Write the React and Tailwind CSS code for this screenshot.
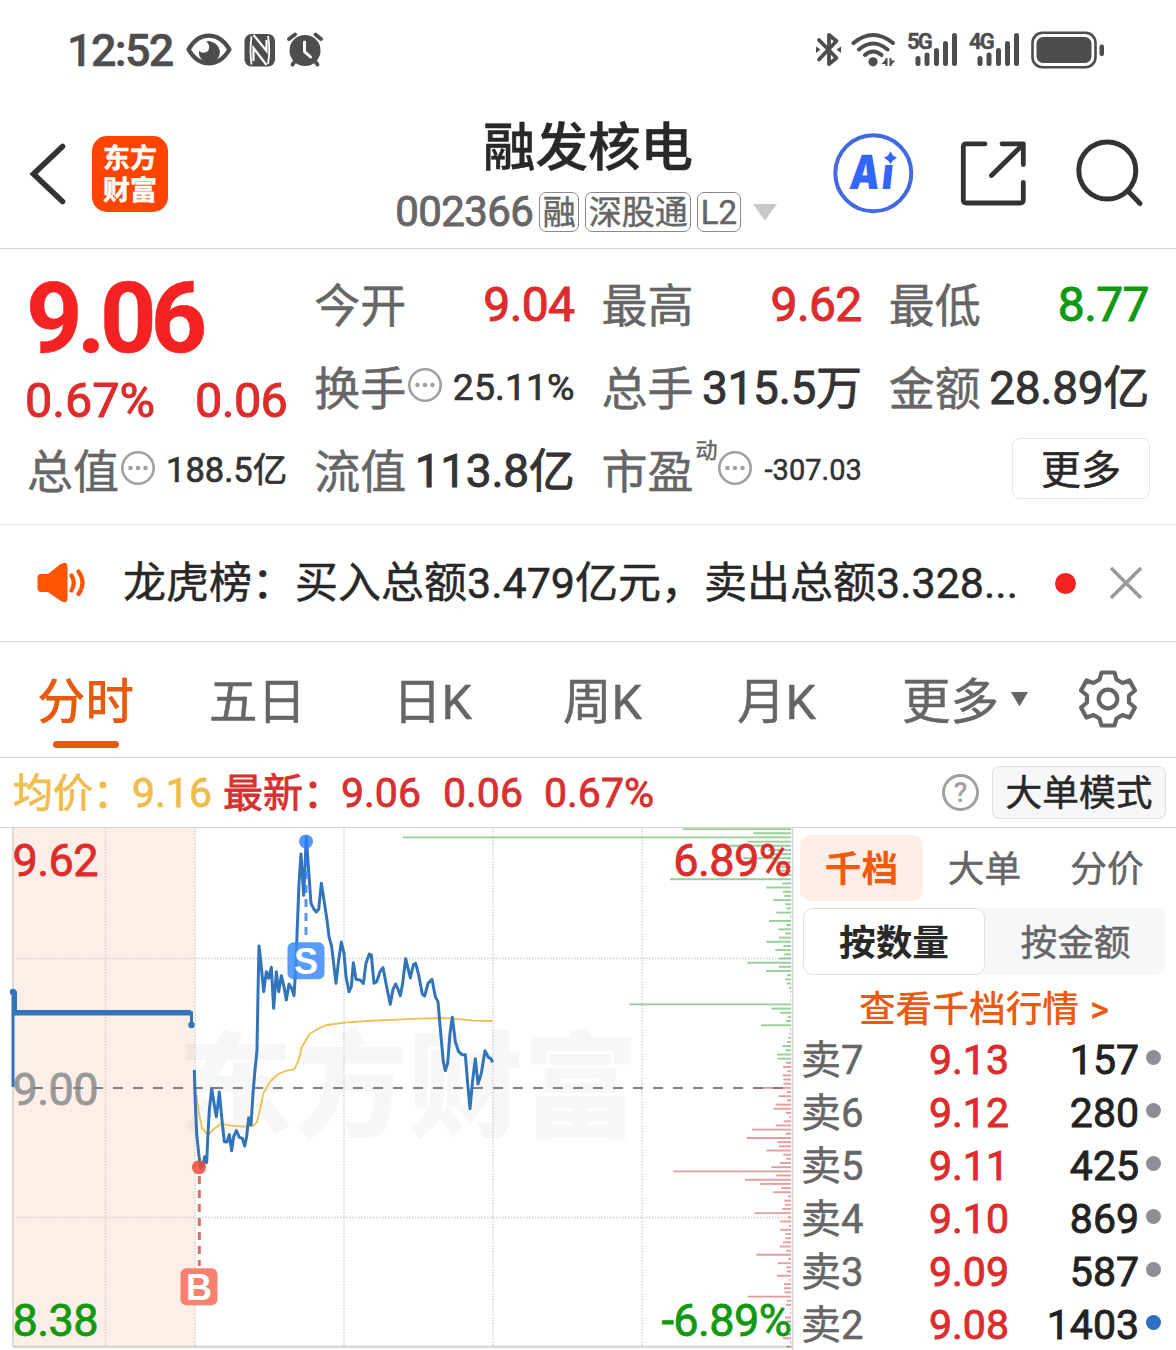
import React from "react";

/* ---------- status bar ---------- */

function SignalBars({ label }) {
  return (
    <div className="flex w-[52px] h-[36px] relative">
      <span className="absolute left-0 top-[-2px] text-[22px] leading-[24px] font-semibold tracking-[-1.8px]">
        {label}
      </span>
      <svg className="w-full h-full" viewBox="0 0 52 36" fill="none" stroke="#4d4d4d" strokeWidth="5" strokeLinecap="round">
        <path d="M11 26.500v5M20 23v8.500M29.500 18.500v13M38.500 11.500v20M47.500 3.500v28" />
      </svg>
    </div>
  );
}

function StatusBar() {
  return (
    <div className="flex h-[100px] items-center pl-[67px] pr-[71px] text-[#4d4d4d]">
      <span className="w-[108px] whitespace-nowrap text-[45px] leading-none font-medium tracking-[-1.7px]">12:52</span>
      <svg className="ml-[11px] w-[46px] h-[34px]" viewBox="186 33 46 34">
        <path d="M188.500 49.500C199 31 218.500 31 229.500 49.500C218.500 68 199 68 188.500 49.500Z" fill="none" stroke="#4d4d4d" strokeWidth="4.200" strokeLinejoin="round" />
        <path d="M206 41.500Q209 40.500 212 42A10.500 10.500 0 1 1 199 50.500C201 53.500 206.500 53.500 208.500 50C210 47 209 43.500 206 41.500Z" fill="#4d4d4d" />
      </svg>
      <svg className="ml-[12px] w-[32px] h-[34px]" viewBox="244 32 32 34">
        <rect x="244.500" y="33" width="30.500" height="32.500" rx="7" fill="#4d4d4d" />
        <path d="M251.500 35.500Q249.500 49 251.500 63.500M268 35Q270.500 49 268 63" fill="none" stroke="#fff" strokeWidth="1.800" />
        <path d="M253.500 34L266.500 50V39M266.500 64L253.500 47V60" fill="none" stroke="#fff" strokeWidth="2.200" />
      </svg>
      <svg className="ml-[10px] w-[38px] h-[36px]" viewBox="286 32 38 36">
        <circle cx="305" cy="50.500" r="15.500" fill="#4d4d4d" />
        <path d="M289 39L295 34.500M315.500 34.500L321 39M292.500 64.500L296 60M317.500 64.500L314 60" stroke="#4d4d4d" strokeWidth="3.800" strokeLinecap="round" />
        <path d="M304.500 42V51.500L310.500 57" fill="none" stroke="#fff" strokeWidth="3" strokeLinecap="round" />
      </svg>

      <div className="ml-auto flex items-center">
        <svg className="w-[28px] h-[36px]" viewBox="815 32 28 36">
          <path d="M820 40L837.500 58L830 64V35L837.500 41L820 59.500" fill="none" stroke="#4d4d4d" strokeWidth="3.800" strokeLinecap="round" strokeLinejoin="round" />
          <path d="M817 46.500L821.500 49.500L817 53ZM842 46.500L837.500 49.500L842 53Z" fill="#4d4d4d" />
        </svg>
        <svg className="ml-[8px] w-[46px] h-[36px]" viewBox="851 32 46 36">
          <path d="M854.500 43Q874 27 894 43M860 49.500Q874 37.500 888.500 49.500M866 55Q874 48 882.500 55" fill="none" stroke="#4d4d4d" strokeWidth="4" strokeLinecap="round" />
          <circle cx="874" cy="61.800" r="4.600" fill="#4d4d4d" />
          <path d="M887.500 58V66M891.500 58V66" stroke="#4d4d4d" strokeWidth="2" />
          <path d="M887.500 58.500L882.500 64H887.500ZM891.500 65.500L896.500 60.500H891.500Z" fill="#4d4d4d" />
        </svg>
        <div className="ml-[11px]"><SignalBars label="5G" /></div>
        <div className="ml-[10px]"><SignalBars label="4G" /></div>
        <svg className="ml-[10px] w-[74px] h-[38px]" viewBox="1032 30.500 74 38">
          <rect x="1033.500" y="32.300" width="63" height="34.400" rx="10" fill="none" stroke="#4d4d4d" strokeWidth="2.600" />
          <rect x="1037.500" y="36.500" width="55" height="26" rx="6.500" fill="#4d4d4d" />
          <rect x="1100.500" y="44" width="4.500" height="11.500" rx="2" fill="#4d4d4d" />
        </svg>
      </div>
    </div>
  );
}

/* ---------- title bar ---------- */

function Tag({ children }) {
  return (
    <span className="flex h-[40px] items-center rounded-[7px] border border-[#8a8a8a] px-[2.5px] pt-[1px] text-[33px] leading-none whitespace-nowrap text-[#666]">
      {children}
    </span>
  );
}

function TitleBar() {
  return (
    <div className="grid h-[149px] grid-cols-[394px_384px_1fr] border-b border-[#d3d5d5]">
      <div className="flex items-start pl-[28px] pt-[36px]">
        <svg className="mt-[6px] w-[40px] h-[64px]" viewBox="28 142 40 64">
          <path d="M62.500 146.500L33.500 174L62.500 201.500" fill="none" stroke="#333" strokeWidth="5.600" strokeLinecap="round" />
        </svg>
        <div className="ml-[24px] flex size-[76px] flex-col items-center justify-center rounded-[15px] bg-[#ff4400] pt-[2px] text-[27px] leading-[32.5px] font-bold text-white">
          <span>东方</span>
          <span>财富</span>
        </div>
      </div>
      <div className="flex flex-col items-center">
        <div className="pl-[4px] mt-[20px] text-[52.5px] leading-[56px] font-medium text-[#282828]">融发核电</div>
        <div className="mt-[16px] flex items-center text-[#666]">
          <span className="w-[138px] text-[42px] leading-[34px] tracking-[-0.6px] [-webkit-text-stroke:0.9px]">002366</span>
          <div className="ml-[6px] flex gap-[6px]">
            <Tag>融</Tag>
            <Tag>深股通</Tag>
            <Tag>L2</Tag>
          </div>
          <svg className="ml-[12px] w-[24px] h-[17px]" viewBox="0 0 24 17">
            <path d="M0 0H24L12 16.500Z" fill="#c8c8c8" />
          </svg>
        </div>
      </div>
      <div className="flex items-start pl-[54px] pt-[32px]">
        <svg className="w-[84px] h-[84px] [-webkit-text-stroke:0px]" viewBox="832 132 84 84">
          <circle cx="873.300" cy="173.300" r="38" fill="none" stroke="#4169e1" strokeWidth="4" />
          <text transform="translate(848.500 188.500) skewX(-6) scale(0.8 1)" fontFamily="Inter" fontWeight="900" fontSize="47" fill="#3366ff" letterSpacing="3">Ai</text>
          <path d="M881 150H900V165H881Z" fill="#fff" />
          <path d="M890.500 151.500L893 155.500L897 157.800L893 160.500L890.500 164L888 160.500L884 157.800L888 155.500Z" fill="#3366ff" />
        </svg>
        <svg className="ml-[42px] mt-[6px] w-[72px] h-[72px]" viewBox="958 138 72 72" fill="none" stroke="#333" strokeWidth="4.800" strokeLinecap="round" strokeLinejoin="round">
          <path d="M985 143.800H966Q963.300 143.800 963.300 147V200Q963.300 203 966.500 203H1020Q1023.300 203 1023.300 200V182.500" />
          <path d="M1002 143.800H1023.300V164.500M1022 145.500L991.500 175.500" />
        </svg>
        <svg className="ml-[44px] mt-[4px] w-[72px] h-[72px]" viewBox="1074 136 72 72" fill="none" stroke="#333" strokeWidth="5" strokeLinecap="round">
          <circle cx="1107.300" cy="170.500" r="28.500" />
          <path d="M1128 191L1140 203.500" />
        </svg>
      </div>
    </div>
  );
}

/* ---------- quote summary ---------- */

function InfoDots() {
  return (
    <svg className="mb-[8px] ml-[1px] size-[36px] shrink-0" viewBox="0 0 36 36">
      <circle cx="18" cy="18" r="15.700" fill="none" stroke="#a0a0a0" strokeWidth="2.600" />
      <circle cx="10.500" cy="18" r="2.300" fill="#a0a0a0" />
      <circle cx="18" cy="18" r="2.300" fill="#a0a0a0" />
      <circle cx="25.500" cy="18" r="2.300" fill="#a0a0a0" />
    </svg>
  );
}

function Cell({ label, sup, info, value, valueClass }) {
  return (
    <div className="flex h-[46px] items-center whitespace-nowrap">
      <span className="text-[46px] leading-[46px] text-[#666]">{label}</span>
      {sup && <span className="mb-[42px] ml-[2px] mr-[-2px] text-[22px] leading-none text-[#666]">{sup}</span>}
      {info && <InfoDots />}
      <span className={`ml-auto ${valueClass}`}>{value}</span>
    </div>
  );
}

const NUM = "mb-[2px] text-[48px] leading-[46px] tracking-[-0.6px] [-webkit-text-stroke:1px]";
const BIG = "mb-[2px] text-[46px] leading-[46px] tracking-[-0.3px] [-webkit-text-stroke:0.9px] text-[#333]";

function Summary() {
  return (
    <div className="grid h-[276px] grid-cols-4 gap-x-[27px] border-b border-[#e6e8e8] pl-[27px] pr-[27px] pt-[34px]">
      <div className="flex flex-col">
        <div className="ml-[-1px] h-[95px] pt-[4px] text-[98.5px] leading-[64px] font-bold tracking-[-5.6px] text-[#f42222]">9.06</div>
        <div className="flex h-[46px] items-center justify-between text-[48.5px] leading-none [-webkit-text-stroke:1px] text-[#dc2c2c]">
          <span className="ml-[-2px]">0.67%</span>
          <span className="tracking-[-0.6px]">0.06</span>
        </div>
        <div className="mt-[25px]">
          <Cell label="总值" info value="188.5亿" valueClass="mb-[3px] text-[34.500px] leading-none text-[#333] [-webkit-text-stroke:0.7px]" />
        </div>
      </div>
      <div className="flex flex-col gap-[37px]">
        <Cell label="今开" value="9.04" valueClass={`${NUM} text-[#dc2c2c]`} />
        <Cell label="换手" info value="25.11%" valueClass="mb-[2px] text-[37.500px] leading-none text-[#333] [-webkit-text-stroke:0.7px]" />
        <Cell label="流值" value="113.8亿" valueClass={BIG} />
      </div>
      <div className="flex flex-col gap-[37px]">
        <Cell label="最高" value="9.62" valueClass={`${NUM} text-[#dc2c2c]`} />
        <Cell label="总手" value="315.5万" valueClass={BIG} />
        <Cell label="市盈" sup="动" info value="-307.03" valueClass="mb-[3px] text-[29px] leading-none text-[#333] [-webkit-text-stroke:0.5px]" />
      </div>
      <div className="flex flex-col gap-[37px]">
        <Cell label="最低" value="8.77" valueClass={`${NUM} text-[#119911]`} />
        <Cell label="金额" value="28.89亿" valueClass={BIG} />
        <button className="mt-[-11px] mr-[-1px] ml-auto flex h-[61px] w-[138px] items-center justify-center rounded-[8px] border-[1.5px] border-[#e4e7e7] pt-[4px] text-[40px] leading-none text-[#282828]">
          更多
        </button>
      </div>
    </div>
  );
}

/* ---------- news ticker ---------- */

function Ticker() {
  return (
    <div className="flex h-[117px] items-center border-b border-[#d3d5d5] pl-[36px] pr-[32px]">
      <svg className="w-[52px] h-[44px]" viewBox="36 560 52 44">
        <path d="M41 573H48L60 563.500Q67.500 559 67.500 566V597Q67.500 604 60 599.500L48 591H41Q37.500 591 37.500 587V577Q37.500 573 41 573Z" fill="#ff5500" />
        <path d="M71.500 574.500Q76 581.500 71.500 589.500M78.500 570.500Q86.500 581.500 78.500 593" fill="none" stroke="#ff5500" strokeWidth="4.200" strokeLinecap="round" />
      </svg>
      <span className="ml-[35px] w-[900px] whitespace-nowrap text-[43px] leading-none text-[#282828]">
        龙虎榜：买入总额3.479亿元，卖出总额3.328...
      </span>
      <span className="ml-auto size-[21px] rounded-full bg-[#f42222]" />
      <svg className="ml-[32px] w-[36px] h-[36px]" viewBox="0 0 36 36">
        <path d="M3 3L33 33M33 3L3 33" stroke="#9a9a9a" strokeWidth="3.600" />
      </svg>
    </div>
  );
}

/* ---------- period tabs ---------- */

function Tabs() {
  return (
    <div className="flex h-[116px] border-b border-[#d3d5d5] pl-[37px] text-[48.5px] leading-[48px] text-[#666]">
      <div className="flex w-[172px] flex-col pt-[37px]">
        <span className="font-medium text-[#e85a10] [-webkit-text-stroke:0px]">分时</span>
        <span className="ml-[16px] mt-[14px] h-[7px] w-[66px] rounded-full bg-[#e85a10]" />
      </div>
      <span className="w-[184px] pt-[37px]">五日</span>
      <span className="w-[170px] pt-[37px]">日K</span>
      <span className="w-[174px] pt-[37px]">周K</span>
      <span className="w-[165px] pt-[37px]">月K</span>
      <span className="flex w-[174px] pt-[37px]">
        更多
        <svg className="ml-[12px] mt-[13px] w-[17px] h-[15px]" viewBox="0 0 17 15">
          <path d="M0 0H17L8.500 14.500Z" fill="#666" />
        </svg>
      </span>
      <svg className="mt-[25px] w-[64px] h-[64px]" viewBox="-32 -32 64 64" fill="none" stroke="#666" strokeWidth="4.200" strokeLinejoin="round">
        <path d="M-6.500 -26.500H6.500L8.500 -19.500L14.500 -16L21.500 -18.500L27 -8.500L21 -3.500V3.500L27 8.500L21.500 18.500L14.500 16L8.500 19.500L6.500 26.500H-6.500L-8.500 19.500L-14.500 16L-21.500 18.500L-27 8.500L-21 3.500V-3.500L-27 -8.500L-21.500 -18.500L-14.500 -16L-8.500 -19.500Z" />
        <circle cx="0" cy="0" r="9.300" />
      </svg>
    </div>
  );
}

function PriceLine() {
  return (
    <div className="flex h-[70px] items-center border-b border-[#d3d5d5] pl-[13px] pr-[10px] text-[40px] leading-none text-[#d63030]">
      <div className="flex items-baseline whitespace-nowrap pt-[1px] [-webkit-text-stroke:0.8px]">
        <span className="w-[119px] text-[#f0bd4a]">均价：</span>
        <span className="w-[91px] text-[41px] text-[#f0bd4a]">9.16</span>
        <span className="w-[118px]">最新：</span>
        <span className="w-[102px] text-[41px]">9.06</span>
        <span className="w-[101px] text-[41px]">0.06</span>
        <span className="text-[41px]">0.67%</span>
      </div>
      <span className="ml-auto flex size-[37px] items-center justify-center rounded-full border-[3px] border-[#a0a0a0] text-[28px] font-medium text-[#a0a0a0] [-webkit-text-stroke:0px]">
        ?
      </span>
      <button className="ml-[13px] flex h-[53px] w-[174px] items-center justify-center rounded-[7px] border border-[#dcdfe2] bg-[#f6f7f9] pt-[4px] text-[36.7px] leading-none text-[#282828]">
        大单模式
      </button>
    </div>
  );
}

/* ---------- chart ---------- */

// Left ends of the volume bars, in thirds of a pixel from x = 490.
const BARS = [
  578, 790, -261, 772, 715, 835, 845, 760, 860, 870, 870, 885, 540, 877, 829, 879, 882, 850, 886, 890, 859, 900, 837, 890,
  865, 886, 867, 829, 880, 856, 882, 867, 772, 867, 828, 891, 886, 890, 897, 900, 901, 901, 418, 844, 870, 894, 888, 813,
  899, 898, 895, 891, 877, 886, 861, 863, 887, 879, 892, 878, 880, 880, 815, 890, 866, 891, 857, 850, 888, 898, 881, 857,
  786, 887, 770, 862, 867, 829, 880, 888, 870, 844, 550, 859, 765, 811, 873, 850, 895, 883, 884, 877, 793, 894, 870, 897,
  871, 887, 886, 879, 869, 889, 799, 895, 863, 889, 890, 861, 898, 882, 882, 884, 774, 891, 887, 900, 900, 885, 890, 895,
  898, 895, 879, 900, 889,
];
const FIRST_RED = 56;

const PRICE =
  "43,750 46,850 50,940 56,1000 62,1045 68,1040 74,1010 80,1028 83,960 88,870 95,805 102,850 109,890 113,860 118,816 124,880 128,920 133,965 141,966 148,944 155,992 161,950 169,932 178,952 187,955 194,978 200,950 206,893 213,915 219,820 224,760 231,690 234,520 237,378 243,430 251,515 259,455 266,475 274,442 281,565 289,455 296,515 304,467 312,500 319,540 327,492 335,505 342,527 347,450 352,320 357,190 363,102 371,226 379,52 385,140 393,250 402,268 409,276 416,268 424,190 432,240 441,300 447,350 455,380 468,490 476,420 484,366 492,400 498,470 507,515 514,500 520,428 528,478 540,480 550,490 558,430 568,402 574,405 582,490 590,485 600,455 609,443 620,500 631,553 639,508 647,492 655,510 661,527 668,490 677,416 684,445 691,474 700,435 707,430 716,465 727,522 734,528 744,490 756,478 766,530 774,545 783,650 790,725 796,752 803,730 810,640 817,592 826,665 836,695 846,704 856,704 863,790 870,866 878,780 886,716 894,792 904,760 915,692 925,712 932,715 938,727";
const AVERAGE =
  "50,825 57,880 66,925 85,945 100,928 122,912 150,916 190,920 218,918 230,908 240,870 250,820 270,785 295,762 320,752 343,748 356,720 365,682 388,642 415,626 440,615 500,607 560,603 650,599 720,596 790,594 840,598 880,602 938,603";

function Chart() {
  const label = { fontFamily: "Roboto, sans-serif", fontSize: 45, letterSpacing: -0.6 };
  return (
    <svg className="h-[522px] w-[794px] shrink-0 [-webkit-text-stroke:0px]" viewBox="0 828 794 522">
      <rect x="13" y="828" width="182" height="518" fill="#feeee8" />
      <text x="178" y="1128" fill="#000" fillOpacity="0.03" fontFamily="'Noto Sans CJK SC', sans-serif" fontWeight="900" fontSize="115" letterSpacing="0">
        东方财富
      </text>

      <g stroke="#d0d0d0" strokeWidth="1.400" strokeDasharray="1.500 1.500">
        <path d="M105.500 828V1346M195.200 828V1346M344 828V1346M493 828V1346M642 828V1346" />
        <path d="M13 958.500H791M13 1217.500H791" />
      </g>
      <path d="M13 828V1346M792.500 828V1350" stroke="#d2d2d6" strokeWidth="1.500" />
      <path d="M13 1346.700H792" stroke="#d0d0d0" strokeWidth="2" />
      <text x="12.500" y="1105" {...label} fill="#999" stroke="#999" strokeWidth="0.8">9.00</text>
      <path d="M33 1088H785" stroke="#808080" strokeWidth="2" strokeDasharray="10 10" />

      {BARS.map((x, i) => (
        <path
          key={i}
          d={`M${(490 + x / 3).toFixed(1)} ${(829.1 + i * 4.174).toFixed(1)}H791`}
          stroke={i < FIRST_RED ? "#4caf50" : "#d65a5a"}
          strokeOpacity="0.6"
          strokeWidth="1.900"
        />
      ))}

      <g fill="none" strokeLinejoin="round" transform="translate(180 820) scale(0.33333)">
        <polyline points={AVERAGE} stroke="#efc050" strokeWidth="5.500" />
        <polyline points={PRICE} stroke="#3274b9" strokeWidth="9" />
      </g>

      <path d="M13 992V1087" stroke="#3274b9" strokeWidth="3" />
      <path d="M15.500 991V1012.700H191.500V1025" fill="none" stroke="#3274b9" strokeWidth="3" />
      <path d="M14 1012.700H191" stroke="#3274b9" strokeWidth="5.500" />
      <circle cx="13" cy="992" r="3.200" fill="#3274b9" />
      <circle cx="191.500" cy="1025" r="3.200" fill="#3274b9" />

      <path d="M306 843V940" stroke="#2b7cf0" strokeOpacity="0.8" strokeWidth="3" strokeDasharray="8 6" />
      <circle cx="306" cy="841.500" r="7" fill="#2b7cf5" fillOpacity="0.8" />
      <rect x="287.500" y="942.300" width="37" height="37" rx="6" fill="#3b8cfb" fillOpacity="0.85" />
      <text x="306" y="974" textAnchor="middle" fontFamily="'Liberation Sans', sans-serif" fontSize="36" fontWeight="700" fill="#fff">S</text>

      <path d="M199.300 1176V1266" stroke="#d9705f" strokeWidth="3" strokeDasharray="8 6" />
      <circle cx="199" cy="1167.300" r="7" fill="#f04a3a" fillOpacity="0.85" />
      <rect x="180.500" y="1268.300" width="37" height="37" rx="6" fill="#f8806e" />
      <text x="199" y="1299.500" textAnchor="middle" fontFamily="'Liberation Sans', sans-serif" fontSize="36" fontWeight="700" fill="#fff">B</text>

      <g {...label} fill="#dc2c2c" stroke="#dc2c2c" strokeWidth="0.8">
        <text x="12.500" y="875.500">9.62</text>
        <text x="791" y="875.500" textAnchor="end">6.89%</text>
      </g>
      <g {...label} fill="#119911" stroke="#119911" strokeWidth="0.8">
        <text x="12.500" y="1335.500">8.38</text>
        <text x="791" y="1335.500" textAnchor="end">-6.89%</text>
      </g>
    </svg>
  );
}

/* ---------- order book ---------- */

const ORDERS = [
  ["卖7", "9.13", "157", "bg-[#8e8e96]"],
  ["卖6", "9.12", "280", "bg-[#8e8e96]"],
  ["卖5", "9.11", "425", "bg-[#8e8e96]"],
  ["卖4", "9.10", "869", "bg-[#8e8e96]"],
  ["卖3", "9.09", "587", "bg-[#8e8e96]"],
  ["卖2", "9.08", "1403", "bg-[#2c70c4]"],
];

function OrderBook() {
  return (
    <div className="flex flex-1 flex-col pl-[6px] pt-[7px] text-[36.7px] leading-none text-[#666]">
      <div className="flex h-[66px] w-[368px] shrink-0">
        <span className="flex w-[123px] items-center justify-center rounded-[10px] bg-[#feeee6] pt-[4px] font-bold text-[#f2590c] [-webkit-text-stroke:0px]">千档</span>
        <span className="flex w-[123px] items-center justify-center pt-[4px]">大单</span>
        <span className="flex w-[122px] items-center justify-center pt-[4px]">分价</span>
      </div>
      <div className="ml-[3px] mt-[7px] flex h-[67px] w-[363px] shrink-0 rounded-[10px] bg-[#f6f7f9]">
        <span className="flex w-[182px] items-center justify-center rounded-[10px] border-[1.5px] border-[#e0e0e2] bg-white pt-[6px] font-bold text-[#282828] [-webkit-text-stroke:0px]">按数量</span>
        <span className="flex flex-1 items-center justify-center pt-[6px]">按金额</span>
      </div>
      <div className="mt-[17px] flex h-[38px] w-[368px] shrink-0 justify-center gap-[11px] whitespace-nowrap font-medium text-[#ea5a10] [-webkit-text-stroke:0px]">
        <span>查看千档行情</span>
        <span>&gt;</span>
      </div>
      <div className="mt-[4px] flex shrink-0 flex-col text-[40px]">
        {ORDERS.map(([name, price, qty, dot]) => (
          <div key={name} className="flex h-[53px] shrink-0 items-center pl-[1px]">
            <span className="w-[128px]">{name}</span>
            <span className="w-[90px] text-[41px] text-[#dc2c2c] [-webkit-text-stroke:0.9px]">{price}</span>
            <span className="w-[120px] text-right text-[41px] text-[#222] [-webkit-text-stroke:0.9px]">{qty}</span>
            <span className={`ml-[7px] mb-[6px] size-[15px] rounded-full ${dot}`} />
          </div>
        ))}
      </div>
    </div>
  );
}

export default function App() {
  return (
    <div className="h-[1350px] w-[1176px] overflow-hidden bg-white font-[Roboto,'Noto_Sans_CJK_SC',sans-serif] [-webkit-text-stroke:0.5px]">
      <StatusBar />
      <TitleBar />
      <Summary />
      <Ticker />
      <Tabs />
      <PriceLine />
      <div className="flex h-[522px]">
        <Chart />
        <OrderBook />
      </div>
    </div>
  );
}
